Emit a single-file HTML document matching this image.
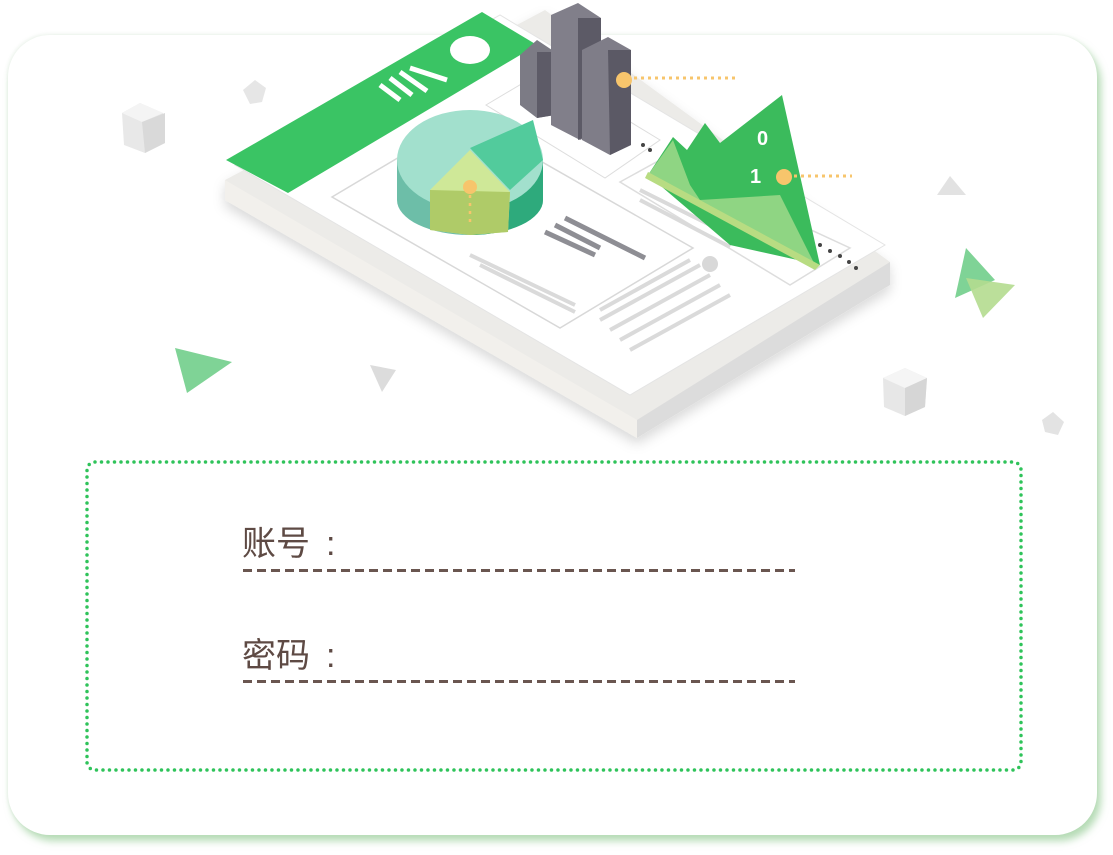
<!DOCTYPE html>
<html><head><meta charset="utf-8"><style>
html,body{margin:0;padding:0;background:#fff;width:1113px;height:855px;overflow:hidden;position:relative;font-family:"Liberation Sans","Noto Sans CJK SC",sans-serif}
.card{position:absolute;left:8px;top:35px;width:1089px;height:800px;background:#fff;border-radius:42px;box-shadow:4px 6px 8px rgba(120,190,120,.55),-1px -1px 3px rgba(200,220,200,.3)}
.lbl{position:absolute;left:242px;font-size:34px;color:#5e4a44;line-height:1}
.col{position:absolute;left:326px;font-size:34px;color:#5e4a44;line-height:1}
.dash{position:absolute;left:243px;width:552px;height:3px;background:repeating-linear-gradient(90deg,#6a5650 0 9px,transparent 9px 14px)}
svg{position:absolute;left:0;top:0}
</style></head><body>
<div class="card"></div>
<svg width="1113" height="855" viewBox="0 0 1113 855">
<defs><filter id="sh"><feDropShadow dx="0" dy="6" stdDeviation="6" flood-color="#000" flood-opacity=".15"/></filter></defs>
<polygon points="225,180 545,10 890,262 890,285 637,438 225,200" fill="#ecebe8" filter="url(#sh)"/>
<polygon points="225,180 637,420 637,438 225,200" fill="#f2f0ec"/>
<polygon points="637,420 890,262 890,285 637,438" fill="#dcdcdc"/>
<polygon points="235,165 500,15 885,245 630,395" fill="#fff" stroke="#e4e4e4"/>
<polygon points="332,197 465,118 693,248 560,328" fill="none" stroke="#d8d8d8" stroke-width="1.5"/>
<polygon points="486,105 545,70 660,140 605,178" fill="none" stroke="#ddd"/>
<polygon points="620,182 660,160 850,248 790,285" fill="none" stroke="#ddd" stroke-width="1.5"/>
<g stroke="#dadada" stroke-width="4">
<line x1="600" y1="320" x2="700" y2="265"/><line x1="610" y1="330" x2="710" y2="275"/><line x1="620" y1="340" x2="720" y2="285"/><line x1="630" y1="350" x2="730" y2="295"/><line x1="600" y1="310" x2="690" y2="260"/>
<line x1="470" y1="255" x2="575" y2="305"/><line x1="480" y1="265" x2="575" y2="312"/>
<line x1="640" y1="190" x2="740" y2="240"/><line x1="640" y1="200" x2="730" y2="247"/>
</g>
<circle cx="710" cy="264" r="8" fill="#d8d8d8"/>
<g stroke="#8e8e94" stroke-width="5"><line x1="565" y1="218" x2="645" y2="258"/><line x1="545" y1="232" x2="595" y2="255"/><line x1="555" y1="225" x2="600" y2="248"/></g>
<polygon points="226,160 482,12 537,45 288,193" fill="#3ac464"/>
<ellipse cx="470" cy="50" rx="20" ry="14" fill="#fff"/>
<g stroke="#fff" stroke-width="5"><line x1="380" y1="85" x2="400" y2="100"/><line x1="390" y1="78" x2="412" y2="95"/><line x1="400" y1="72" x2="427" y2="91"/><line x1="410" y1="68" x2="447" y2="80"/></g>
<path d="M397,160 v40 a73,35 0 0 0 146,0 v-40 z" fill="#6dbea8"/>
<path d="M470,195 v40 a73,35 0 0 0 73,-35 v-40 z" fill="#2eaa7c"/>
<ellipse cx="470" cy="160" rx="73" ry="50" fill="#a2e0cd"/>
<polygon points="470,148 533,120 543,160 510,190" fill="#52cb9c"/>
<polygon points="470,150 510,192 508,232 470,235 430,230 430,190" fill="#cfe898"/>
<polygon points="430,190 510,192 508,232 470,235 430,230" fill="#afcb68"/>
<circle cx="470" cy="187" r="7" fill="#f7c56c"/>
<line x1="470" y1="195" x2="470" y2="222" stroke="#f7c56c" stroke-width="2.5" stroke-dasharray="3,5"/>
<polygon points="520,55 537,40 555,52 555,115 537,118 520,105" fill="#7c7b85"/>
<polygon points="537,52 555,52 555,115 537,118" fill="#5d5b67"/>
<polygon points="551,15 578,3 601,18 601,130 580,140 551,125" fill="#817f8a"/>
<polygon points="578,18 601,18 601,130 578,140" fill="#5c5a66"/>
<polygon points="582,50 608,37 631,50 631,145 610,155 582,140" fill="#7f7d88"/>
<polygon points="608,50 631,50 631,145 610,155" fill="#5b5965"/>
<circle cx="624" cy="80" r="8" fill="#f7c56c"/>
<line x1="634" y1="78" x2="735" y2="78" stroke="#f7c56c" stroke-width="3" stroke-dasharray="3,4"/>
<polygon points="648,175 673,137 687,150 705,123 720,143 782,95 820,265 730,245" fill="#3bbb5c"/>
<polygon points="648,175 673,140 690,185 700,200 780,195 815,265" fill="#9fd98a" opacity=".85"/>
<polygon points="648,172 820,265 815,270 645,178" fill="#b8dc82"/>
<g fill="#444"><circle cx="643" cy="145" r="2"/><circle cx="650" cy="150" r="2"/><circle cx="820" cy="245" r="2"/><circle cx="830" cy="251" r="2"/><circle cx="840" cy="256" r="2"/><circle cx="849" cy="262" r="2"/><circle cx="856" cy="268" r="2"/></g>
<text x="757" y="145" font-size="20" font-weight="bold" fill="#fff" font-family="Liberation Sans">0</text>
<text x="750" y="183" font-size="20" font-weight="bold" fill="#fff" font-family="Liberation Sans">1</text>
<circle cx="784" cy="177" r="8" fill="#f7c56c"/>
<line x1="794" y1="176" x2="852" y2="176" stroke="#f7c56c" stroke-width="3" stroke-dasharray="3,4"/>
<polygon points="122,113 140,103 163,113 165,143 145,153 124,145" fill="#e8e8e8"/>
<polygon points="122,113 142,122 163,113 140,103" fill="#f4f4f4"/>
<polygon points="142,122 165,113 165,143 145,153" fill="#d9d9d9"/>
<polygon points="243,90 255,80 266,88 262,102 250,104" fill="#e6e6e6"/>
<polygon points="883,378 905,368 927,378 925,407 905,416 884,407" fill="#e7e7e7"/>
<polygon points="883,378 905,388 927,378 905,368" fill="#f5f5f5"/>
<polygon points="905,388 927,378 925,407 905,416" fill="#d6d6d6"/>
<polygon points="1042,420 1053,412 1064,422 1058,435 1045,432" fill="#e3e3e3"/>
<polygon points="937,195 950,176 966,195" fill="#e2e2e2"/>
<polygon points="370,365 396,370 382,392" fill="#dcdcdc"/>
<polygon points="175,348 232,362 187,393" fill="#7fd396"/>
<polygon points="966,248 995,280 955,298" fill="#7fd396"/>
<polygon points="966,278 1015,285 983,318" fill="#b4dc8f" opacity=".9"/>
<rect x="87" y="462" width="934" height="308" rx="8" fill="none" stroke="#2fc35a" stroke-width="3.5" stroke-linecap="round" stroke-dasharray="0,6.5"/>
</svg>
<div class="lbl" style="top:527px">账号</div><div class="col" style="top:527px">:</div>
<div class="dash" style="top:569px"></div>
<div class="lbl" style="top:639px">密码</div><div class="col" style="top:639px">:</div>
<div class="dash" style="top:680px"></div>
</body></html>
